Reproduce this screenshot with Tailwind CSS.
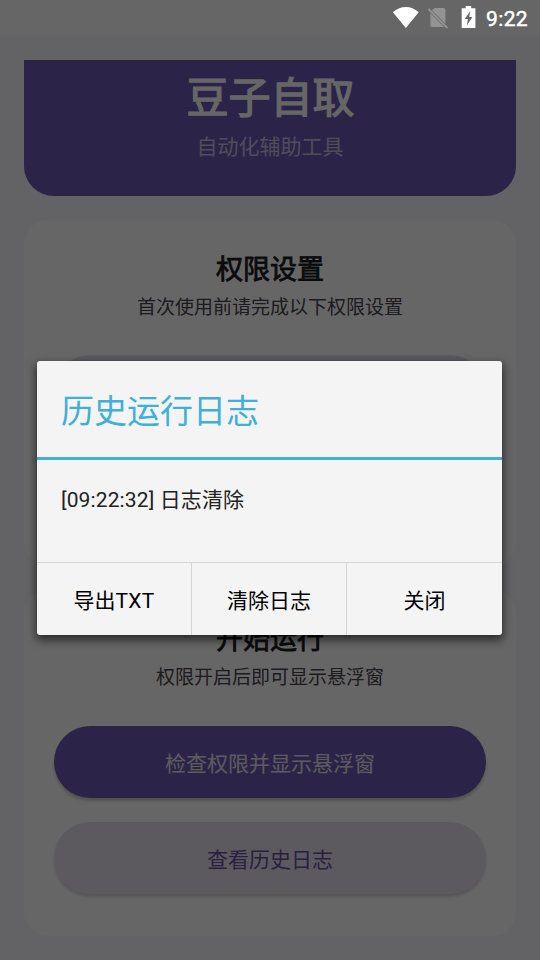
<!DOCTYPE html>
<html lang="zh-CN">
<head>
<meta charset="utf-8">
<title>豆子自取</title>
<script src="https://cdn.jsdelivr.net/npm/@tailwindcss/browser@4"></script>
</head>
<body class="relative h-[960px] w-[540px] overflow-hidden bg-[#f7f4fa] font-[Roboto,'Noto_Sans_CJK_SC',sans-serif]">
  <div class="flex h-full flex-col">
    <div class="h-9 shrink-0 bg-white"></div>
    <main class="flex flex-col gap-6 px-6 pt-6">
      <header class="flex h-[136px] flex-col items-center rounded-b-[30px] bg-[#6c5ab4] pt-2 text-white">
        <h1 class="pl-px text-[42px] leading-[62px] [-webkit-text-stroke:1.300px_currentColor]">豆子自取</h1>
        <p class="text-[21px] leading-[35px] text-[#c8c0e0]">自动化辅助工具</p>
      </header>
      <section class="flex h-[346px] flex-col items-center rounded-3xl bg-white px-[30px] pt-[31px]">
        <h2 class="text-[27px] leading-[39px] text-[#1c1b1f] [-webkit-text-stroke:0.8px_currentColor]">权限设置</h2>
        <p class="text-[19px] leading-[36px] text-[#49454f]">首次使用前请完成以下权限设置</p>
        <div class="mt-[29px] h-[72px] w-full shrink-0 rounded-full bg-[#e8e0ee]"></div>
        <div class="mt-6 h-[72px] w-full shrink-0 rounded-full bg-[#e8e0ee]"></div>
      </section>
      <section class="flex h-[346px] flex-col items-center rounded-3xl bg-white px-[30px] pt-[31px]">
        <h2 class="text-[27px] leading-[39px] text-[#1c1b1f] [-webkit-text-stroke:0.8px_currentColor]">开始运行</h2>
        <p class="text-[19px] leading-[36px] text-[#49454f]">权限开启后即可显示悬浮窗</p>
        <button class="mt-[30px] h-[72px] w-full shrink-0 rounded-full bg-[#6c5ab4] pt-[5px] text-[21px] text-[#e8e4ec] shadow-[0_3px_3px_rgba(0,0,0,0.2)]">检查权限并显示悬浮窗</button>
        <button class="mt-6 h-[72px] w-full shrink-0 rounded-full bg-[#e8e0ee] pt-[5px] text-[21px] text-[#6750a4] shadow-[0_3px_3px_rgba(0,0,0,0.16)]">查看历史日志</button>
      </section>
    </main>
  </div>

  <div class="absolute inset-0 bg-black/60"></div>

  <div class="absolute inset-x-0 top-0 flex h-9 items-center justify-end pr-3 text-white">
    <svg class="h-9 w-[94px]" viewBox="0 0 94 36">
      <g transform="translate(.7 0)">
        <path fill="#fff" d="M.2 12.300C8 5.300 18.500 5.300 26 12.300L13.100 28Z"/>
        <path fill="#939393" d="M42.500 8H51Q52.700 8 52.700 10V23.800L39 10.100ZM37.700 13.300 51.400 27H39.500Q37.700 27 37.700 25.200Z"/>
        <path stroke="#939393" stroke-width="1.800" d="M35.700 9 54.700 28"/>
        <path fill="#fff" fill-rule="evenodd" d="M73 6H78.500V8.200H82.700V28H69V8.200H73ZM77.500 11 72 19H75.200L74.200 25.500 79.700 16.900H76.500Z"/>
      </g>
    </svg>
    <span class="pt-[2px] text-[21px] leading-9 tracking-[0.35px] [-webkit-text-stroke:0.45px_currentColor]">9:22</span>
  </div>

  <div role="dialog" class="absolute top-[361px] left-[37px] flex h-[274px] w-[465px] flex-col rounded-[3px] bg-[#f4f4f4] shadow-[0_4px_10px_1px_rgba(0,0,0,0.6)]">
    <h2 class="h-[99px] border-b-[3px] border-[#40b0d8] pl-6 text-[33px] leading-[101px] text-[#40b0d8]">历史运行日志</h2>
    <p class="grow pt-[25px] pl-6 text-[21px] leading-[31px] tracking-[0.12px] text-[#222]">[09:22:32] 日志清除</p>
    <div class="flex h-[73px] divide-x divide-[#d5d5d5] border-t border-[#d5d5d5] text-[21px] text-black">
      <button class="w-[155px] pt-[5px]">导出<span class="tracking-[0.3px]">TXT</span></button>
      <button class="w-[155px] pt-[5px]">清除日志</button>
      <button class="w-[155px] pt-[5px]">关闭</button>
    </div>
  </div>
</body>
</html>
